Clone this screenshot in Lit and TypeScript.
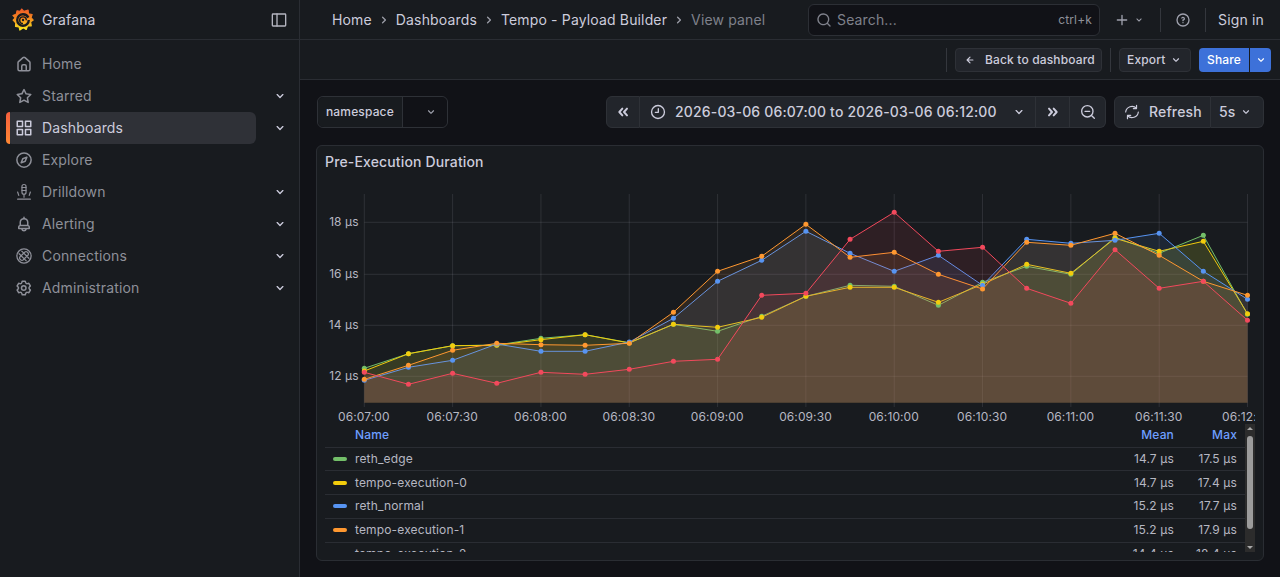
import { LitElement, html, css, svg } from "lit";
import { customElement } from "lit/decorators.js";

const P = {
  down: "M17,9.17a1,1,0,0,0-1.41,0L12,12.71,8.46,9.17a1,1,0,0,0-1.41,0,1,1,0,0,0,0,1.42l4.24,4.24a1,1,0,0,0,1.42,0L17,10.59A1,1,0,0,0,17,9.17Z",
  right: "M14.83,11.29,10.59,7.05a1,1,0,0,0-1.42,0,1,1,0,0,0,0,1.41L12.71,12,9.17,15.54a1,1,0,0,0,0,1.41,1,1,0,0,0,.71.29,1,1,0,0,0,.71-.29l4.24-4.24A1,1,0,0,0,14.83,11.29Z",
  search: "M21.71,20.29,18,16.61A9,9,0,1,0,16.61,18l3.68,3.68a1,1,0,0,0,1.42,0A1,1,0,0,0,21.71,20.29ZM11,18a7,7,0,1,1,7-7A7,7,0,0,1,11,18Z",
  plus: "M19,11H13V5a1,1,0,0,0-2,0v6H5a1,1,0,0,0,0,2h6v6a1,1,0,0,0,2,0V13h6a1,1,0,0,0,0-2Z",
  help: "M11.29,15.29a1.58,1.58,0,0,0-.12.15.76.76,0,0,0-.09.18.64.64,0,0,0-.06.18,1.36,1.36,0,0,0,0,.2.84.84,0,0,0,.08.38.9.9,0,0,0,.54.54.94.94,0,0,0,.76,0,.9.9,0,0,0,.54-.54A1,1,0,0,0,13,16a1,1,0,0,0-.29-.71A1,1,0,0,0,11.29,15.29ZM12,2A10,10,0,1,0,22,12,10,10,0,0,0,12,2Zm0,18a8,8,0,1,1,8-8A8,8,0,0,1,12,20ZM12,7A3,3,0,0,0,9.4,8.5a1,1,0,1,0,1.73,1A1,1,0,0,1,12,9a1,1,0,0,1,0,2,1,1,0,0,0-1,1v1a1,1,0,0,0,2,0v-.18A3,3,0,0,0,12,7Z",
  back: "M17,11H9.41l3.3-3.29a1,1,0,1,0-1.42-1.42l-5,5a1,1,0,0,0-.21.33,1,1,0,0,0,0,.76,1,1,0,0,0,.21.33l5,5a1,1,0,0,0,1.42,0,1,1,0,0,0,0-1.42L9.41,13H17a1,1,0,0,0,0-2Z",
  home: "M20,8h0L14,2.74a3,3,0,0,0-4,0L4,8a3,3,0,0,0-1,2.26V19a3,3,0,0,0,3,3H18a3,3,0,0,0,3-3V10.25A3,3,0,0,0,20,8ZM14,20H10V15a1,1,0,0,1,1-1h2a1,1,0,0,1,1,1Zm5-1a1,1,0,0,1-1,1H16V15a3,3,0,0,0-3-3H11a3,3,0,0,0-3,3v5H6a1,1,0,0,1-1-1V10.25a1,1,0,0,1,.34-.75l6-5.25a1,1,0,0,1,1.32,0l6,5.25a1,1,0,0,1,.34.75Z",
  star: "M22,9.67A1,1,0,0,0,21.14,9l-5.69-.83L12.9,3a1,1,0,0,0-1.8,0L8.55,8.16,2.86,9a1,1,0,0,0-.81.68,1,1,0,0,0,.25,1l4.13,4-1,5.68A1,1,0,0,0,6.9,21.44L12,18.77l5.1,2.67a.93.93,0,0,0,.46.12,1,1,0,0,0,.59-.19,1,1,0,0,0,.4-1l-1-5.68,4.13-4A1,1,0,0,0,22,9.67Zm-6.15,4a1,1,0,0,0-.29.88l.72,4.2-3.76-2a1.06,1.06,0,0,0-.94,0l-3.76,2,.72-4.2a1,1,0,0,0-.29-.88l-3-3,4.21-.61a1,1,0,0,0,.76-.55L12,5.7l1.88,3.82a1,1,0,0,0,.76.55l4.21.61Z",
  apps: "M10,13H3a1,1,0,0,0-1,1v7a1,1,0,0,0,1,1h7a1,1,0,0,0,1-1V14A1,1,0,0,0,10,13ZM9,20H4V15H9ZM21,2H14a1,1,0,0,0-1,1v7a1,1,0,0,0,1,1h7a1,1,0,0,0,1-1V3A1,1,0,0,0,21,2ZM20,9H15V4h5Zm1,4H14a1,1,0,0,0-1,1v7a1,1,0,0,0,1,1h7a1,1,0,0,0,1-1V14A1,1,0,0,0,21,13Zm-1,7H15V15h5ZM10,2H3A1,1,0,0,0,2,3v7a1,1,0,0,0,1,1h7a1,1,0,0,0,1-1V3A1,1,0,0,0,10,2ZM9,9H4V4H9Z",
  bell: "M18,13.18V10a6,6,0,0,0-5-5.91V3a1,1,0,0,0-2,0V4.09A6,6,0,0,0,6,10v3.18A3,3,0,0,0,4,16v2a1,1,0,0,0,1,1H8.14a4,4,0,0,0,7.72,0H19a1,1,0,0,0,1-1V16A3,3,0,0,0,18,13.18ZM8,10a4,4,0,0,1,8,0v3H8Zm4,10a2,2,0,0,1-1.72-1h3.44A2,2,0,0,1,12,20Zm6-3H6V16a1,1,0,0,1,1-1H17a1,1,0,0,1,1,1Z",
  cog: "M19.9,12.66a1,1,0,0,1,0-1.32L21.18,9.9a1,1,0,0,0,.12-1.17l-2-3.46a1,1,0,0,0-1.07-.48l-1.88.38a1,1,0,0,1-1.15-.66l-.61-1.83A1,1,0,0,0,13.64,2h-4a1,1,0,0,0-1,.68L8.08,4.51a1,1,0,0,1-1.15.66L5,4.79A1,1,0,0,0,4,5.27L2,8.73A1,1,0,0,0,2.1,9.9l1.27,1.44a1,1,0,0,1,0,1.32L2.1,14.1A1,1,0,0,0,2,15.27l2,3.46a1,1,0,0,0,1.07.48l1.88-.38a1,1,0,0,1,1.15.66l.61,1.83a1,1,0,0,0,1,.68h4a1,1,0,0,0,.95-.68l.61-1.83a1,1,0,0,1,1.15-.66l1.88.38a1,1,0,0,0,1.07-.48l2-3.46a1,1,0,0,0-.12-1.17ZM18.41,14l.8.9-1.28,2.22-1.18-.24a3,3,0,0,0-3.45,2L12.92,20H10.36L10,18.86a3,3,0,0,0-3.45-2l-1.18.24L4.07,14.89l.8-.9a3,3,0,0,0,0-4l-.8-.9L5.35,6.89l1.18.24a3,3,0,0,0,3.45-2L10.36,4h2.56l.38,1.14a3,3,0,0,0,3.45,2l1.18-.24,1.28,2.22-.8.9A3,3,0,0,0,18.41,14ZM11.64,8a4,4,0,1,0,4,4A4,4,0,0,0,11.64,8Zm0,6a2,2,0,1,1,2-2A2,2,0,0,1,11.64,14Z",
};

const ic = (d: string, cls = "i16") => html`<svg class=${cls} viewBox="0 0 24 24" fill="currentColor"><path d=${d}></path></svg>`;
const st = (inner: unknown, cls = "i16", w = 2) => html`<svg class=${cls} viewBox="0 0 24 24" fill="none" stroke="currentColor" stroke-width=${w} stroke-linecap="round" stroke-linejoin="round">${inner}</svg>`;

const I = {
  compass: () => st(svg`<circle cx="12" cy="12" r="9.5"/><path d="M15.8 8.2 10.4 10.4 8.2 15.8 13.6 13.6Z"/>`, "i18"),
  drill: () => st(svg`<rect x="9.3" y="2" width="5.4" height="13" rx="2.7"/><path d="M9.3 6h5.4M9.3 10h5.4M12 15v4M3.5 12l1.5 4.5M20.5 12l-1.5 4.5M3.5 21.5h17"/>`, "i18", 1.6),
  conn: () => st(svg`<circle cx="12" cy="12" r="9.5"/><path d="M5.5 9 15 18.5M9 5.5l9.5 9.5M9.8 10 13 6.8a2.4 2.4 0 0 1 3.4 0l.8.8a2.4 2.4 0 0 1 0 3.4L14 14.2M10 9.8l-3.2 3.2a2.4 2.4 0 0 0 0 3.4l.8.8a2.4 2.4 0 0 0 3.4 0L14 14"/>`, "i18", 1.7),
  dock: () => st(svg`<rect x="2" y="3" width="20" height="18" rx="1"/><path d="M9 3v18"/>`, "i16", 2),
  dl: () => st(svg`<path d="M11 7 6.5 12 11 17M18 7 13.5 12 18 17"/>`, "i16", 3),
  dr: () => st(svg`<path d="M6 7l4.5 5L6 17M13 7l4.5 5L13 17"/>`, "i16", 3),
  clock: () => st(svg`<circle cx="12" cy="12" r="9.7"/><path d="M12.5 7v5.5H8"/>`),
  zoomOut: () => st(svg`<circle cx="11" cy="11" r="8.5"/><path d="M7.5 11h7M17.2 17.2 21.5 21.5"/>`),
  sync: () => st(svg`<path d="M5.2 17.5A9.5 9.5 0 0 0 21.5 12M18.8 6.5A9.5 9.5 0 0 0 2.5 12M18.8 2v4.8H14M5.2 22v-4.8H10"/>`, "i16", 1.8),
};

const logo = () => html`<svg class="logo" viewBox="0 0 24 26">
  <defs><linearGradient id="lg" x1="0.5" y1="1" x2="0.5" y2="0"><stop offset="0" stop-color="#fcee1f"></stop><stop offset="0.55" stop-color="#f58a1f"></stop><stop offset="1" stop-color="#f05a28"></stop></linearGradient></defs>
  <path fill="url(#lg)" stroke="url(#lg)" stroke-width="1.2" stroke-linejoin="round" d="M10.5 1 13 3.6 17.6 2.2 18 6.2 22 7 20.8 10.4 23.2 13 20.4 15 21 19.4 17 19.6 15.5 23.4 12.2 21.6 8.6 24 7.6 20.6 3.8 20 4 16 1.2 13.2 3.4 10.6 1 8 4.8 6.4 5.4 3 9 3.6Z"></path>
  <path fill="#181b1f" d="M12 5.4a7.6 7.6 0 1 0 7.6 7.6H17a5 5 0 1 1-5-5 5 5 0 0 1 4.6 3L19 9.8A7.6 7.6 0 0 0 12 5.4Z"></path>
  <path fill="none" stroke="#181b1f" stroke-width="1.6" d="M15.6 13.2a3.6 3.6 0 1 0-3.6 3.6"></path>
  <circle cx="12" cy="13" r="1.3" fill="#181b1f"></circle>
</svg>`;

const nav = [
  { n: "Home", i: () => ic(P.home, "i18"), c: false },
  { n: "Starred", i: () => ic(P.star, "i18"), c: true },
  { n: "Dashboards", i: () => ic(P.apps, "i18"), c: true, a: true },
  { n: "Explore", i: I.compass, c: false },
  { n: "Drilldown", i: I.drill, c: true },
  { n: "Alerting", i: () => ic(P.bell, "i18"), c: true },
  { n: "Connections", i: I.conn, c: true },
  { n: "Administration", i: () => ic(P.cog, "i18"), c: true },
];

const X0 = 364.3, DX = 44.16, OX = 325, OY = 178;
const series = [
  { c: "#73BF69", y: [368.3, 353.7, 345.7, 345, 338.3, 334.7, 342.7, 324.3, 331.3, 316.3, 296.3, 285.3, 286.3, 305.3, 282.3, 266.3, 274.3, 237.3, 253.3, 235.3, 314.3] },
  { c: "#F2CC0C", y: [371, 353.7, 345.7, 345.3, 339.7, 334.7, 343, 324.3, 327.3, 317.3, 296.3, 287.3, 287.3, 302.3, 284.3, 264.3, 273.3, 238.3, 251.3, 241.3, 313.7] },
  { c: "#5794F2", y: [380.3, 367.3, 360.3, 344, 351.3, 351.3, 342, 318.3, 281.3, 260.3, 231.3, 253.3, 271.3, 255.3, 285.3, 239.3, 243.3, 240.3, 233.3, 271.3, 299.3] },
  { c: "#FF9830", y: [379.3, 365.3, 350.3, 343.3, 344.7, 345.3, 343.3, 312.3, 271.3, 256.3, 224.3, 257.3, 252.3, 274.3, 289, 242.3, 245.3, 233.3, 255.3, 281.3, 295.3] },
  { c: "#F2495C", y: [372.3, 384.3, 373.3, 383.3, 372.3, 374.3, 369.3, 361.3, 359.3, 295.3, 293.3, 239.3, 212.3, 251.3, 247.3, 288.3, 303.3, 249.7, 288.3, 281.3, 320.3] },
];
const yTicks = [["18 µs", 222.3], ["16 µs", 274.3], ["14 µs", 325.3], ["12 µs", 376.3]] as const;
const xTicks = ["06:07:00", "06:07:30", "06:08:00", "06:08:30", "06:09:00", "06:09:30", "06:10:00", "06:10:30", "06:11:00", "06:11:30", "06:12:00"];
const BOTTOM = 402.7, RIGHT = X0 + 20 * DX;

const legend = [
  { n: "reth_edge", c: "#73BF69", m: "14.7 µs", x: "17.5 µs" },
  { n: "tempo-execution-0", c: "#F2CC0C", m: "14.7 µs", x: "17.4 µs" },
  { n: "reth_normal", c: "#5794F2", m: "15.2 µs", x: "17.7 µs" },
  { n: "tempo-execution-1", c: "#FF9830", m: "15.2 µs", x: "17.9 µs" },
  { n: "tempo-execution-2", c: "#F2495C", m: "14.4 µs", x: "18.4 µs" },
];

@customElement("app-root")
export class AppRoot extends LitElement {
  static styles = css`
    :host { display: block; width: 1280px; height: 577px; overflow: hidden; background: #111217; color: #ccccdc; font: 14px/20px Inter, "Noto Sans", sans-serif; letter-spacing: 0.15px; }
    * { box-sizing: border-box; }
    svg { display: block; flex: none; }
    .i18 { width: 18px; height: 18px; }
    .i16 { width: 16px; height: 16px; }
    .i14 { width: 14px; height: 14px; }
    .i12 { width: 12px; height: 12px; }
    .app { display: grid; grid-template-columns: 300px 1fr; height: 577px; }
    .side { background: #181b1f; border-right: 1px solid #2a2d33; }
    .brand { height: 40px; border-bottom: 1px solid #2a2d33; display: flex; align-items: center; padding: 0 12px 0 12px; color: #ccccdc; }
    .logo { width: 22px; height: 24px; margin-right: 8px; }
    .brand .name { flex: 1; }
    .brand .i16 { color: #b4b5c0; }
    .nav { padding-top: 8px; }
    .item { height: 32px; display: flex; align-items: center; width: 250px; margin-left: 6px; padding-left: 9px; border-radius: 6px; color: #8e9099; position: relative; }
    .item .i18 { margin-right: 9px; color: #8e9099; }
    .item .chev { position: absolute; left: 266px; top: 8px; color: #ccccdc; margin: 0; }
    .item.active { background: #2f3137; color: #ccccdc; }
    .item.active .i18 { color: #ccccdc; }
    .item.active::before { content: ""; position: absolute; left: 0; top: 0; bottom: 0; width: 4px; border-radius: 4px 0 0 4px; background: linear-gradient(#f55f3e, #ff8833); }
    .main { display: flex; flex-direction: column; min-width: 0; }
    .top { height: 40px; flex: none; background: #181b1f; border-bottom: 1px solid #2a2d33; display: flex; align-items: center; padding-left: 32px; }
    .crumbs { display: flex; align-items: center; width: 476px; white-space: nowrap; }
    .crumbs .i16 { color: #9a9ca6; margin: 0 4px; }
    .crumbs .cur { color: #7f818b; }
    .search { width: 292px; height: 32px; border: 1px solid #2c2f35; border-radius: 6px; background: #111217; display: flex; align-items: center; padding: 0 7px; color: #7f818b; gap: 5px; }
    .search .grow { flex: 1; }
    .search .kbd { font-size: 12px; color: #8e9099; }
    .tools { display: flex; align-items: center; color: #9fa1ad; flex: 1; white-space: nowrap; }
    .tools .plus { margin-left: 14px; }
    .tools .i12 { margin-left: 3px; }
    .div { width: 1px; height: 24px; background: #34373d; flex: none; }
    .d1 { margin: 0 14px 0 15px; }
    .d2 { margin: 0 12px 0 14px; }
    .sign { color: #ccccdc; }
    .bar2 { height: 40px; flex: none; background: #181b1f; border-bottom: 1px solid #2a2d33; display: flex; align-items: center; justify-content: flex-end; padding-right: 9px; font-size: 12px; font-weight: 500; white-space: nowrap; }
    .btn { height: 24px; display: flex; align-items: center; background: #22252b; border: 1px solid #2e3137; border-radius: 4px; color: #ccccdc; }
    .backb { padding: 0 6px 0 7px; width: 147px; gap: 8px; margin: 0 8px; }
    .expb { padding: 0 7px; width: 72px; margin-left: 8px; justify-content: space-between; }
    .share { margin-left: 8px; display: flex; gap: 1px; color: #fff; }
    .share div { height: 24px; background: #3d71d9; display: flex; align-items: center; justify-content: center; }
    .share .a { width: 50px; border-radius: 4px 0 0 4px; }
    .share .b { width: 21px; border-radius: 0 4px 4px 0; }
    .body { flex: 1; min-height: 0; padding: 16px 16px 0; display: flex; flex-direction: column; gap: 17px; }
    .tb { display: flex; height: 32px; align-items: stretch; flex: none; margin-left: 1px; justify-content: space-between; }
    .ns { display: flex; width: 131px; border: 1px solid #2e3137; border-radius: 6px; font-size: 12px; font-weight: 500; }
    .ns .l { width: 85px; display: flex; align-items: center; padding-left: 8px; border-right: 1px solid #2e3137; background: #181b1f; border-radius: 6px 0 0 6px; }
    .ns .r { flex: 1; display: flex; align-items: center; justify-content: flex-end; padding-right: 9px; color: #9fa1ad; background: #111217; border-radius: 0 6px 6px 0; }
    .group { display: flex; white-space: nowrap; }
    .seg { background: #22252b; border: 1px solid #2e3137; border-left-width: 0; display: flex; align-items: center; font-weight: 500; color: #ccccdc; }
    .seg.first { border-left-width: 1px; border-radius: 6px 0 0 6px; }
    .seg.last { border-radius: 0 6px 6px 0; }
    .rl { display: flex; gap: 8px; }
    .s1 { width: 34px; justify-content: center; }
    .s2 { width: 396px; padding-left: 10px; gap: 9px; }
    .s2 .t { letter-spacing: 0.16px; }
    .s2 .i12b { margin-left: 5px; width: 16px; height: 16px; }
    .s3 { width: 34px; justify-content: center; }
    .s4 { width: 36px; justify-content: center; }
    .s5 { width: 97px; padding-left: 9px; gap: 9px; }
    .s6 { width: 53px; padding-left: 8px; gap: 3px; }
    .panel { height: 416px; flex: none; background: #181b1f; border: 1px solid #2a2d33; border-radius: 6px; padding: 0 8px 8px; display: flex; flex-direction: column; overflow: hidden; }
    .ptitle { height: 32px; flex: none; display: flex; align-items: center; font-weight: 500; }
    .chart { width: 930px; height: 246px; flex: none; }
    .chart text { font: 12px Inter, "Noto Sans", sans-serif; fill: #b6b7c2; letter-spacing: 0.1px; }
    .lg { flex: 1; min-height: 0; overflow: hidden; position: relative; font-size: 12px; padding-right: 10px; }
    .row { height: 23.75px; display: grid; grid-template-columns: 30px 1fr 70px 63px; padding-right: 8px; align-items: center; border-bottom: 1px solid #2a2d33; color: #b6b7c2; }
    .row.head { color: #6e9fff; font-weight: 500; height: 23.6px; }
    .num { text-align: right; }
    .dash { width: 14px; height: 4px; border-radius: 2px; margin-left: 8px; }
    .scroll { position: absolute; right: 0; top: 0; bottom: 0; width: 10px; background: #2c2c2c; }
    .thumb { position: absolute; left: 2px; right: 2px; top: 12px; height: 93px; background: #9c9c9c; border-radius: 3px; }
    .up, .dn { position: absolute; left: 2px; width: 0; height: 0; border-left: 3px solid transparent; border-right: 3px solid transparent; }
    .up { top: 3px; border-bottom: 3px solid #a8a8a8; }
    .dn { bottom: 3px; border-top: 3px solid #a8a8a8; }
  `;

  private chart() {
    return html`<svg class="chart" viewBox="${OX} ${OY} 930 246">
      ${yTicks.map(([, y]) => svg`<line x1=${X0} x2=${RIGHT} y1=${y} y2=${y} stroke="rgba(204,204,220,0.12)"></line>`)}
      ${xTicks.map((_, i) => { const x = X0 + i * 2 * DX; return svg`<line x1=${x} x2=${x} y1="194" y2="407" stroke="rgba(204,204,220,0.12)"></line>`; })}
      ${series.map((s) => {
        const pts = s.y.map((y, i) => `${(X0 + i * DX).toFixed(1)},${y}`).join(" ");
        return svg`<polygon points="${X0},${BOTTOM} ${pts} ${RIGHT},${BOTTOM}" fill=${s.c} fill-opacity="0.1"></polygon>
          <polyline points=${pts} fill="none" stroke=${s.c} stroke-width="1"></polyline>`;
      })}
      ${series.map((s) => s.y.map((y, i) => svg`<circle cx=${X0 + i * DX} cy=${y} r="2.5" fill=${s.c}></circle>`))}
      ${yTicks.map(([t, y]) => svg`<text x="358.7" y=${y + 3.7} text-anchor="end">${t}</text>`)}
      ${xTicks.map((t, i) => svg`<text x=${X0 + i * 2 * DX - 0.4} y="421" text-anchor="middle">${t}</text>`)}
    </svg>`;
  }

  render() {
    return html`<div class="app">
      <aside class="side">
        <div class="brand">${logo()}<span class="name">Grafana</span>${I.dock()}</div>
        <nav class="nav">
          ${nav.map((n) => html`<div class="item ${n.a ? "active" : ""}">${n.i()}<span>${n.n}</span>${n.c ? ic(P.down, "i16 chev") : ""}</div>`)}
        </nav>
      </aside>
      <div class="main">
        <header class="top">
          <div class="crumbs"><span>Home</span>${ic(P.right)}<span>Dashboards</span>${ic(P.right)}<span>Tempo - Payload Builder</span>${ic(P.right)}<span class="cur">View panel</span></div>
          <div class="search">${ic(P.search)}<span class="grow">Search...</span><span class="kbd">ctrl+k</span></div>
          <div class="tools">
            <span class="plus">${ic(P.plus)}</span>${ic(P.down, "i12")}
            <span class="div d1"></span>${ic(P.help)}<span class="div d2"></span><span class="sign">Sign in</span>
          </div>
        </header>
        <div class="bar2">
          <span class="div"></span>
          <div class="btn backb">${ic(P.back, "i14")}<span>Back to dashboard</span></div>
          <span class="div"></span>
          <div class="btn expb"><span>Export</span>${ic(P.down, "i14")}</div>
          <div class="share"><div class="a">Share</div><div class="b">${ic(P.down, "i14")}</div></div>
        </div>
        <div class="body">
          <div class="tb">
            <div class="ns"><div class="l">namespace</div><div class="r">${ic(P.down, "i14")}</div></div>
            <div class="rl">
              <div class="group">
                <div class="seg first s1">${I.dl()}</div>
                <div class="seg s2">${I.clock()}<span class="t">2026-03-06 06:07:00 to 2026-03-06 06:12:00</span>${ic(P.down, "i12b")}</div>
                <div class="seg s3">${I.dr()}</div>
                <div class="seg last s4">${I.zoomOut()}</div>
              </div>
              <div class="group">
                <div class="seg first s5">${I.sync()}<span>Refresh</span></div>
                <div class="seg last s6"><span>5s</span>${ic(P.down, "i14")}</div>
              </div>
            </div>
          </div>
          <section class="panel">
            <div class="ptitle">Pre-Execution Duration</div>
            ${this.chart()}
            <div class="lg">
              <div class="row head"><span></span><span>Name</span><span class="num">Mean</span><span class="num">Max</span></div>
              ${legend.map((l) => html`<div class="row"><span class="dash" style="background:${l.c}"></span><span>${l.n}</span><span class="num">${l.m}</span><span class="num">${l.x}</span></div>`)}
              <div class="scroll"><div class="up"></div><div class="thumb"></div><div class="dn"></div></div>
            </div>
          </section>
        </div>
      </div>
    </div>`;
  }
}
